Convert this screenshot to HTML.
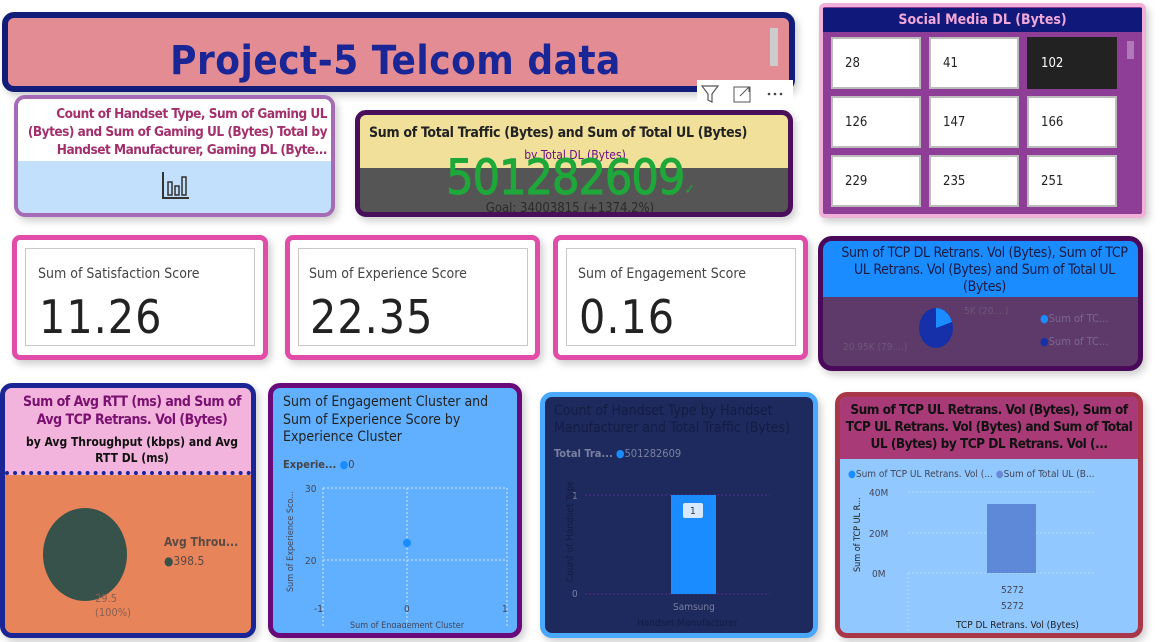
<!DOCTYPE html>
<html><head><meta charset="utf-8"><style>
*{box-sizing:border-box;margin:0;padding:0}
body{width:1162px;height:642px;background:#fff;position:relative;overflow:hidden;font-family:"Liberation Sans",sans-serif}
.a{position:absolute}
.c{position:absolute;overflow:hidden;box-shadow:3px 4px 8px rgba(0,0,0,.2)}
.n{font-family:"DejaVu Sans Condensed","Liberation Sans Narrow","Liberation Sans",sans-serif}
.t{position:absolute;background:#fff;border:2px solid #bbb;font-size:13px;color:#222;padding-left:12px;display:flex;align-items:center}
</style></head><body>

<!-- Title -->
<div class="c" style="left:2px;top:12px;width:793px;height:80px;border:6px solid #111d78;border-radius:12px;background:#e48c94">
 <div class="a n" style="left:0;width:775px;top:20px;text-align:center;font-size:40px;font-weight:bold;color:#1a2596;letter-spacing:0.5px">Project-5 Telcom  data</div>
 <div class="a" style="left:762px;top:10px;width:8px;height:38px;background:#ccc"></div>
</div>
<div class="a" style="left:697px;top:80px;width:96px;height:27px;background:#fff"></div>
<svg class="a" style="left:699px;top:83px" width="92" height="22"><path d="M3 3h16l-6 8v8l-4-2v-6z" fill="none" stroke="#555" stroke-width="1.2"/><rect x="35" y="4" width="16" height="15" fill="none" stroke="#555"/><path d="M41 13l9-9M45 4h5v5" fill="none" stroke="#555"/><circle cx="70" cy="11" r="1.3" fill="#444"/><circle cx="76" cy="11" r="1.3" fill="#444"/><circle cx="82" cy="11" r="1.3" fill="#444"/></svg>

<!-- Card1 -->
<div class="c" style="left:14px;top:95px;width:321px;height:122px;border:4px solid #a66bb5;border-radius:11px;background:#c2e0fb">
 <div class="a n" style="left:0;top:0;width:313px;height:62px;background:#fff;color:#a3306c;font-size:13.5px;font-weight:bold;text-align:right;padding:6px 4px 0 4px;line-height:18px;letter-spacing:-0.5px">Count of Handset Type, Sum of Gaming UL (Bytes) and Sum of Gaming UL (Bytes) Total by Handset Manufacturer, Gaming DL (Byte...</div>
 <svg class="a" style="left:142px;top:70px" width="32" height="32"><path d="M3 3v26h26" fill="none" stroke="#333" stroke-width="2"/><rect x="8" y="13" width="4" height="13" fill="none" stroke="#333" stroke-width="1.5"/><rect x="15" y="17" width="4" height="9" fill="none" stroke="#333" stroke-width="1.5"/><rect x="22" y="8" width="4" height="18" fill="none" stroke="#333" stroke-width="1.5"/></svg>
</div>

<!-- Card2 -->
<div class="c" style="left:355px;top:110px;width:438px;height:107px;border:5px solid #4a0f5a;border-radius:11px;background:#555">
 <div class="a" style="left:0;top:0;width:430px;height:53px;background:#f0e09a"></div>
 <div class="a n" style="left:9px;top:10px;font-size:14px;font-weight:bold;color:#222;letter-spacing:-0.3px">Sum of Total Traffic (Bytes) and Sum of Total UL (Bytes)</div>
 <div class="a n" style="left:0;width:430px;top:33px;text-align:center;font-size:12px;color:#6a1080">by Total DL (Bytes)</div>
 <div class="a n" style="left:0;width:420px;top:35px;text-align:center;font-size:48px;color:#1fa83a;letter-spacing:-1px;-webkit-text-stroke:1px #1fa83a">501282609<span style="font-size:14px;-webkit-text-stroke:0">✓</span></div>
 <div class="a n" style="left:0;width:420px;top:86px;text-align:center;font-size:13px;color:#2a2a2a">Goal: 34003815 (+1374.2%)</div>
</div>

<!-- Social Media -->
<div class="c" style="left:819px;top:3px;width:327px;height:215px;border:4px solid #f0b0d8;border-radius:6px;background:#8e3e96">
 <div class="a n" style="left:0;top:1px;width:319px;height:24px;background:#10187a;color:#f0a8d8;font-size:14px;font-weight:bold;text-align:center;line-height:24px">Social Media DL (Bytes)</div>
 <div class="a" style="left:304px;top:34px;width:7px;height:18px;background:#b07ab8"></div>
</div>
<div class="t n" style="left:831px;top:37px;width:90px;height:52px">28</div>
<div class="t n" style="left:929px;top:37px;width:90px;height:52px">41</div>
<div class="t n" style="left:1027px;top:37px;width:90px;height:52px;background:#222;border-color:#222;color:#fff">102</div>
<div class="t n" style="left:831px;top:96px;width:90px;height:52px">126</div>
<div class="t n" style="left:929px;top:96px;width:90px;height:52px">147</div>
<div class="t n" style="left:1027px;top:96px;width:90px;height:52px">166</div>
<div class="t n" style="left:831px;top:155px;width:90px;height:52px">229</div>
<div class="t n" style="left:929px;top:155px;width:90px;height:52px">235</div>
<div class="t n" style="left:1027px;top:155px;width:90px;height:52px">251</div>

<!-- KPIs -->
<div class="c" style="left:12px;top:235px;width:256px;height:125px;border:5px solid #e04ca8;border-radius:8px;background:#fff">
 <div class="a" style="left:8px;top:8px;width:230px;height:98px;border:1px solid #c8c8c8"></div>
 <div class="a n" style="left:21px;top:26px;font-size:14px;color:#444">Sum of Satisfaction Score</div>
 <div class="a n" style="left:22px;top:50px;font-size:46px;color:#222;letter-spacing:1px">11.26</div>
</div>
<div class="c" style="left:285px;top:235px;width:255px;height:125px;border:5px solid #e04ca8;border-radius:8px;background:#fff">
 <div class="a" style="left:8px;top:8px;width:230px;height:98px;border:1px solid #c8c8c8"></div>
 <div class="a n" style="left:19px;top:26px;font-size:14px;color:#444">Sum of Experience Score</div>
 <div class="a n" style="left:20px;top:50px;font-size:46px;color:#222;letter-spacing:1px">22.35</div>
</div>
<div class="c" style="left:553px;top:235px;width:255px;height:125px;border:5px solid #e04ca8;border-radius:8px;background:#fff">
 <div class="a" style="left:8px;top:8px;width:230px;height:98px;border:1px solid #c8c8c8"></div>
 <div class="a n" style="left:20px;top:26px;font-size:14px;color:#444">Sum of Engagement Score</div>
 <div class="a n" style="left:21px;top:50px;font-size:46px;color:#222;letter-spacing:1px">0.16</div>
</div>

<!-- TCP pie -->
<div class="c" style="left:818px;top:236px;width:325px;height:135px;border:5px solid #4a0a5a;border-radius:14px;background:#5e3a6a">
 <div class="a n" style="left:0;top:0;width:315px;height:56px;background:#1a8cff;color:#1a1a40;font-size:14px;text-align:center;line-height:17px;padding:4px 6px 0 14px;letter-spacing:-0.3px">Sum of TCP DL Retrans. Vol (Bytes), Sum of TCP UL Retrans. Vol (Bytes) and Sum of Total UL (Bytes)</div>
 <svg class="a" style="left:92px;top:64px" width="50" height="46"><ellipse cx="21" cy="23" rx="17" ry="20" fill="#1530a8"/><path d="M21 23V3a17 20 0 0 1 16 14z" fill="#1a8cff"/></svg>
 <div class="a n" style="left:141px;top:65px;font-size:10px;color:#6e5878">5K (20....)</div>
 <div class="a n" style="left:20px;top:101px;font-size:10px;color:#6e5878">20.95K (79....)</div>
 <div class="a n" style="left:217px;top:71px;font-size:11px;color:#7a6890"><span style="color:#1a8cff">●</span>Sum of TC...</div>
 <div class="a n" style="left:217px;top:94px;font-size:11px;color:#7a6890"><span style="color:#1530a8">●</span>Sum of TC...</div>
</div>

<!-- RTT card -->
<div class="c" style="left:0;top:383px;width:256px;height:255px;border:5px solid #1a2596;border-radius:12px;background:#e8845a">
 <div class="a" style="left:0;top:0;width:246px;height:87px;background:#f2b4dc;border-bottom:4px dotted #1a2596"></div>
 <div class="a n" style="left:0;width:246px;top:5px;text-align:center;font-size:14px;font-weight:bold;color:#7a1070;line-height:18px;padding:0 6px 0 14px;letter-spacing:-0.5px">Sum of Avg RTT (ms) and Sum of Avg TCP Retrans. Vol (Bytes)</div>
 <div class="a n" style="left:0;width:246px;top:46px;text-align:center;font-size:12px;font-weight:bold;color:#111;line-height:16px;padding-left:8px">by Avg Throughput (kbps) and Avg RTT DL (ms)</div>
 <div class="a" style="left:38px;top:120px;width:84px;height:93px;border-radius:50%;background:#37524a"></div>
 <div class="a n" style="left:159px;top:147px;font-size:12px;font-weight:bold;color:#5a4a44">Avg Throu...</div>
 <div class="a n" style="left:159px;top:166px;font-size:12px;color:#5a4a44"><span style="color:#37524a">●</span>398.5</div>
 <div class="a n" style="left:90px;top:204px;font-size:11px;color:#8a6050;line-height:14px">29.5<br>(100%)</div>
</div>

<!-- Engagement scatter -->
<div class="c" style="left:268px;top:383px;width:254px;height:255px;border:5px solid #6a0a7a;border-radius:12px;background:#60b0ff">
 <div class="a n" style="left:10px;top:6px;font-size:14px;color:#222;line-height:17.5px">Sum of Engagement Cluster and Sum of Experience Score by Experience Cluster</div>
 <div class="a n" style="left:10px;top:70px;font-size:11px;font-weight:bold;color:#444">Experie... <span style="color:#1a8cff;font-weight:normal">●</span><span style="font-weight:normal">0</span></div>
 <svg class="a" style="left:0;top:90px" width="250" height="150">
  <g stroke="#d8e8ff" stroke-dasharray="2 2" fill="none"><path d="M50 10H234M50 82H234M50 10V150M134 10V150M234 10V150"/></g>
  <circle cx="134" cy="65" r="4" fill="#1a8cff"/>
  <g font-family="DejaVu Sans Condensed,sans-serif" font-size="10" fill="#445"><text x="32" y="14">30</text><text x="32" y="86">20</text><text x="41" y="134">-1</text><text x="131" y="134">0</text><text x="229" y="134">1</text><text x="77" y="150" font-size="9">Sum of Engagement Cluster</text><text transform="translate(20,114) rotate(-90)" font-size="9">Sum of Experience Sco...</text></g>
 </svg>
</div>

<!-- Handset -->
<div class="c" style="left:540px;top:392px;width:278px;height:246px;border:5px solid #4aa8ff;border-radius:12px;background:#1e2a5e">
 <div class="a n" style="left:9px;top:6px;font-size:14px;color:#141c44;line-height:17px">Count of Handset Type by Handset Manufacturer and Total Traffic (Bytes)</div>
 <div class="a n" style="left:9px;top:50px;font-size:11px;color:#7a80a0"><b>Total Tra...</b> <span style="color:#1a8cff">●</span>501282609</div>
 <svg class="a" style="left:0;top:85px" width="270" height="150">
  <g stroke="#5a2a8a" stroke-dasharray="2 2"><path d="M40 13H225M40 112H225"/></g>
  <rect x="126" y="13" width="45" height="99" fill="#1a8cff"/>
  <rect x="138" y="21" width="20" height="15" rx="2" fill="#d8e8ff"/>
  <g font-family="DejaVu Sans Condensed,sans-serif" font-size="10" fill="#7a80a0"><text x="145" y="32" fill="#333">1</text><text x="27" y="17">1</text><text x="27" y="115">0</text><text x="128" y="128">Samsung</text><text x="92" y="144" fill="#141c44">Handset Manufacturer</text><text transform="translate(28,100) rotate(-90)" fill="#141c44">Count of Handset Type</text></g>
 </svg>
</div>

<!-- TCP UL -->
<div class="c" style="left:835px;top:392px;width:308px;height:246px;border:5px solid #a83848;border-radius:12px;background:#90c8ff">
 <div class="a n" style="left:0;top:0;width:298px;height:62px;background:#a83a78;color:#111;font-size:13.5px;font-weight:bold;text-align:center;line-height:17px;padding-top:5px;letter-spacing:-0.5px">Sum of TCP UL Retrans. Vol (Bytes), Sum of TCP UL Retrans. Vol (Bytes) and Sum of Total UL (Bytes) by TCP DL Retrans. Vol (...</div>
 <div class="a n" style="left:8px;top:72px;font-size:10px;color:#445"><span style="color:#1a8cff">●</span>Sum of TCP UL Retrans. Vol (... <span style="color:#6a88d8">●</span>Sum of Total UL (B...</div>
 <svg class="a" style="left:0;top:85px" width="300" height="155">
  <g stroke="#b8dcff" stroke-dasharray="2 2"><path d="M68 10H255M68 51H255M68 91H255M68 91V150"/></g>
  <rect x="147" y="22" width="49" height="69" fill="#5e88d8"/>
  <g font-family="DejaVu Sans Condensed,sans-serif" font-size="10" fill="#445"><text x="29" y="14">40M</text><text x="29" y="55">20M</text><text x="32" y="95">0M</text><text x="161" y="111">5272</text><text x="161" y="127">5272</text><text x="116" y="146" fill="#222">TCP DL Retrans. Vol (Bytes)</text><text transform="translate(20,90) rotate(-90)" font-size="9" fill="#222">Sum of TCP UL R...</text></g>
 </svg>
</div>
</body></html>
